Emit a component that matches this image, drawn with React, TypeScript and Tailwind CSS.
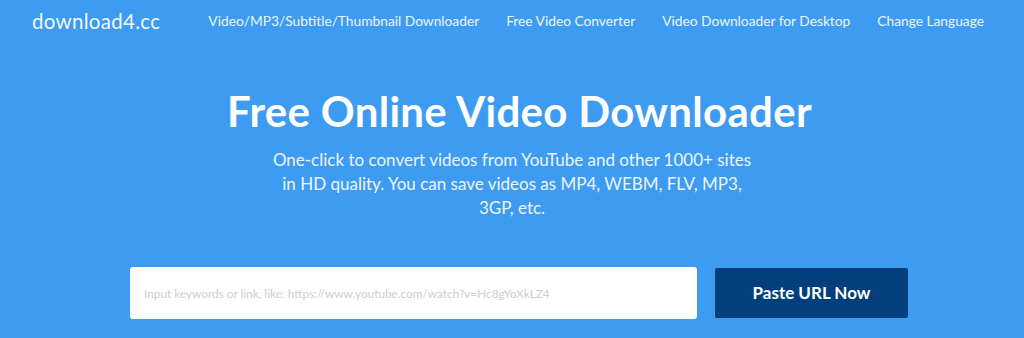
import { useState } from "react";

const navLinks = [
  "Video/MP3/Subtitle/Thumbnail Downloader",
  "Free Video Converter",
  "Video Downloader for Desktop",
  "Change Language",
];

export default function App() {
  const [query, setQuery] = useState("");

  return (
    <div
      className="w-[1024px] h-[338px] overflow-hidden bg-[#3d9bf2] text-white"
      style={{ fontFamily: "Lato, 'Noto Sans', sans-serif" }}
    >
      {/* Header */}
      <header className="flex items-center h-[42px] pl-[32px] pr-[30px]">
        <a href="#" className="text-[20.5px] tracking-[0.3px] text-white/95">
          download4.cc
        </a>
        <nav className="ml-[48px] flex items-center gap-[27px] text-[13.75px] text-white/90">
          {navLinks.map((link) => (
            <a key={link} href="#" className="whitespace-nowrap">
              {link}
            </a>
          ))}
        </nav>
      </header>

      {/* Hero */}
      <section className="flex flex-col items-center pt-[44px]">
        <h1 className="ml-[15px] text-[42px] leading-[50px] font-bold tracking-[0.3px]">
          Free Online Video Downloader
        </h1>
        <p className="mt-[12px] w-[490px] text-center text-[17px] leading-[24px] text-white/90">
          One-click to convert videos from YouTube and other 1000+ sites in HD
          quality. You can save videos as MP4, WEBM, FLV, MP3, 3GP, etc.
        </p>

        <div className="mt-[47px] flex items-center gap-[18px] pl-[14px]">
          <input
            value={query}
            onChange={(e) => setQuery(e.target.value)}
            placeholder="Input keywords or link, like: https://www.youtube.com/watch?v=Hc8gYoXkLZ4"
            className="w-[567px] h-[52px] rounded-[3px] bg-white px-[14px] text-[11.8px] text-gray-700 placeholder:text-[#cdcdcd] outline-none"
          />
          <button className="w-[193px] h-[50px] rounded-[2px] bg-[#023f7c] text-[17px] font-bold text-white">
            Paste URL Now
          </button>
        </div>
      </section>
    </div>
  );
}
